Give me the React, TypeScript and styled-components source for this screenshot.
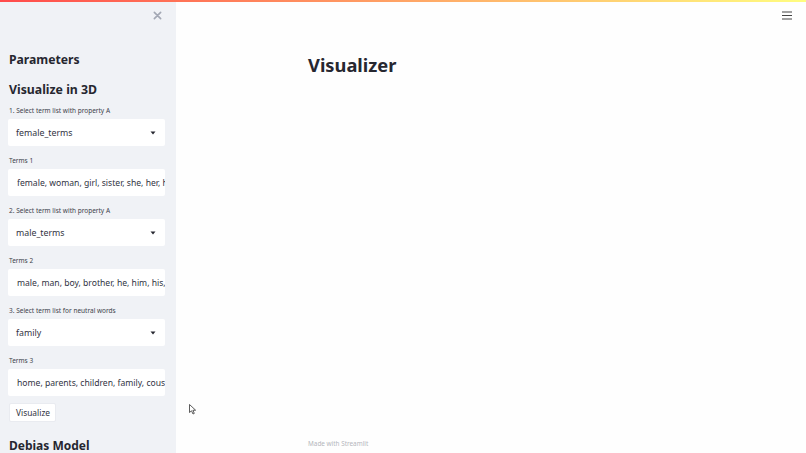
import React from 'react';
import styled, { createGlobalStyle } from 'styled-components';

const GlobalStyle = createGlobalStyle`
  html, body {
    margin: 0;
    padding: 0;
    width: 806px;
    height: 453px;
    overflow: hidden;
    background: #fefefe;
    font-family: 'Noto Sans', 'Open Sans', sans-serif;
    color: #262730;
  }
`;

interface IField {
  label: string;
  value: string;
  kind: 'select' | 'text';
}

const fields: IField[] = [
  { label: '1. Select term list with property A', value: 'female_terms', kind: 'select' },
  { label: 'Terms 1', value: 'female, woman, girl, sister, she, her, hers, daughter', kind: 'text' },
  { label: '2. Select term list with property A', value: 'male_terms', kind: 'select' },
  { label: 'Terms 2', value: 'male, man, boy, brother, he, him, his, son', kind: 'text' },
  { label: '3. Select term list for neutral words', value: 'family', kind: 'select' },
  { label: 'Terms 3', value: 'home, parents, children, family, cousins', kind: 'text' },
];

const App = (): JSX.Element => {
  return (
    <>
      <GlobalStyle />
      <StyledDecoration />
      <StyledPage>
        <StyledSidebar>
          <StyledClose>
            <svg width="9" height="9" viewBox="0 0 10 10">
              <path d="M1.5 1.5L8.5 8.5M8.5 1.5L1.5 8.5" stroke="#a3a8b4" strokeWidth="1.8" strokeLinecap="round" />
            </svg>
          </StyledClose>
          <StyledTitle>Parameters</StyledTitle>
          <StyledSubTitle>Visualize in 3D</StyledSubTitle>
          {fields.map((f) => (
            <StyledGroup key={f.label}>
              <StyledLabel>{f.label}</StyledLabel>
              {f.kind === 'select' ? (
                <StyledSelect>
                  <span>{f.value}</span>
                  <svg width="6" height="4" viewBox="0 0 6 4">
                    <path d="M0.5 0.5L5.5 0.5L3 3.5Z" fill="#262730" />
                  </svg>
                </StyledSelect>
              ) : (
                <StyledInput readOnly value={f.value} />
              )}
            </StyledGroup>
          ))}
          <StyledButton>Visualize</StyledButton>
          <StyledSection>Debias Model</StyledSection>
        </StyledSidebar>
        <StyledMain>
          <StyledMenu>
            <svg width="10" height="9" viewBox="0 0 10 9">
              <path d="M0 1h10M0 4.5h10M0 8h10" stroke="#444" strokeWidth="1.2" />
            </svg>
          </StyledMenu>
          <StyledHeading>Visualizer</StyledHeading>
          <StyledSpacer />
          <StyledFooter>Made with Streamlit</StyledFooter>
          <StyledCursor>
            <svg width="8" height="11" viewBox="0 0 8 11">
              <path d="M0.5 0.5L0.5 8.5L2.5 6.8L4 10L5.3 9.4L3.9 6.3L6.6 6.2Z" fill="#fff" stroke="#333" strokeWidth="0.8" />
            </svg>
          </StyledCursor>
        </StyledMain>
      </StyledPage>
    </>
  );
};

export default App;

const StyledDecoration = styled.div`
  height: 2px;
  width: 100%;
  background: linear-gradient(90deg, rgb(255, 75, 75), rgb(255, 253, 128));
`;

const StyledPage = styled.div`
  display: flex;
  height: 451px;
`;

const StyledSidebar = styled.div`
  width: 176px;
  flex-shrink: 0;
  box-sizing: border-box;
  background: #f0f2f6;
  padding: 0 11px 0 8px;
  display: flex;
  flex-direction: column;
  position: relative;
  overflow: hidden;
`;

const StyledClose = styled.div`
  position: absolute;
  top: 9px;
  left: 153px;
  display: flex;
`;

const StyledTitle = styled.div`
  margin-top: 49px;
  font-size: 12.2px;
  font-weight: 700;
  line-height: 18px;
  margin-left: 1px;
`;

const StyledSubTitle = styled.div`
  margin-top: 12px;
  font-size: 12.3px;
  font-weight: 700;
  line-height: 18px;
  margin-bottom: 7px;
  margin-left: 1px;
`;

const StyledGroup = styled.div`
  display: flex;
  flex-direction: column;
  margin-bottom: 10px;
`;

const StyledLabel = styled.div`
  font-size: 6.5px;
  line-height: 10px;
  color: #3d3f4a;
  margin-bottom: 3px;
  margin-left: 1px;
  white-space: nowrap;
`;

const StyledSelect = styled.div`
  height: 27px;
  box-sizing: border-box;
  background: #fff;
  border-radius: 2px;
  display: flex;
  align-items: center;
  justify-content: space-between;
  padding: 0 9px 0 8px;
  font-size: 8.8px;
  color: #31333f;
`;

const StyledInput = styled.input`
  height: 27px;
  width: 100%;
  box-sizing: border-box;
  background: #fff;
  border: none;
  outline: none;
  border-radius: 2px;
  padding: 0 0 0 9px;
  font-family: inherit;
  font-size: 8.6px;
  color: #31333f;
`;

const StyledButton = styled.div`
  align-self: flex-start;
  margin-top: -3px;
  margin-left: 1px;
  height: 19px;
  box-sizing: border-box;
  padding: 0 5px 0 6px;
  background: #fff;
  border: 1px solid #e9ebf0;
  border-radius: 2px;
  font-size: 8.4px;
  line-height: 17px;
  color: #31333f;
`;

const StyledSection = styled.div`
  margin-top: 17px;
  font-size: 12px;
  font-weight: 700;
  line-height: 14px;
  white-space: nowrap;
  margin-left: 1px;
`;

const StyledMain = styled.div`
  flex: 1;
  position: relative;
  display: flex;
  flex-direction: column;
  padding-left: 132px;
`;

const StyledMenu = styled.div`
  position: absolute;
  top: 9px;
  right: 14px;
  display: flex;
`;

const StyledHeading = styled.div`
  margin-top: 51px;
  font-size: 18.3px;
  font-weight: 700;
  line-height: 24px;
  color: #262730;
`;

const StyledSpacer = styled.div`
  flex: 1;
`;

const StyledFooter = styled.div`
  font-size: 6.4px;
  line-height: 10px;
  color: #b4b6bc;
  margin-bottom: 4px;
`;

const StyledCursor = styled.div`
  position: absolute;
  left: 13px;
  top: 402px;
  display: flex;
`;
